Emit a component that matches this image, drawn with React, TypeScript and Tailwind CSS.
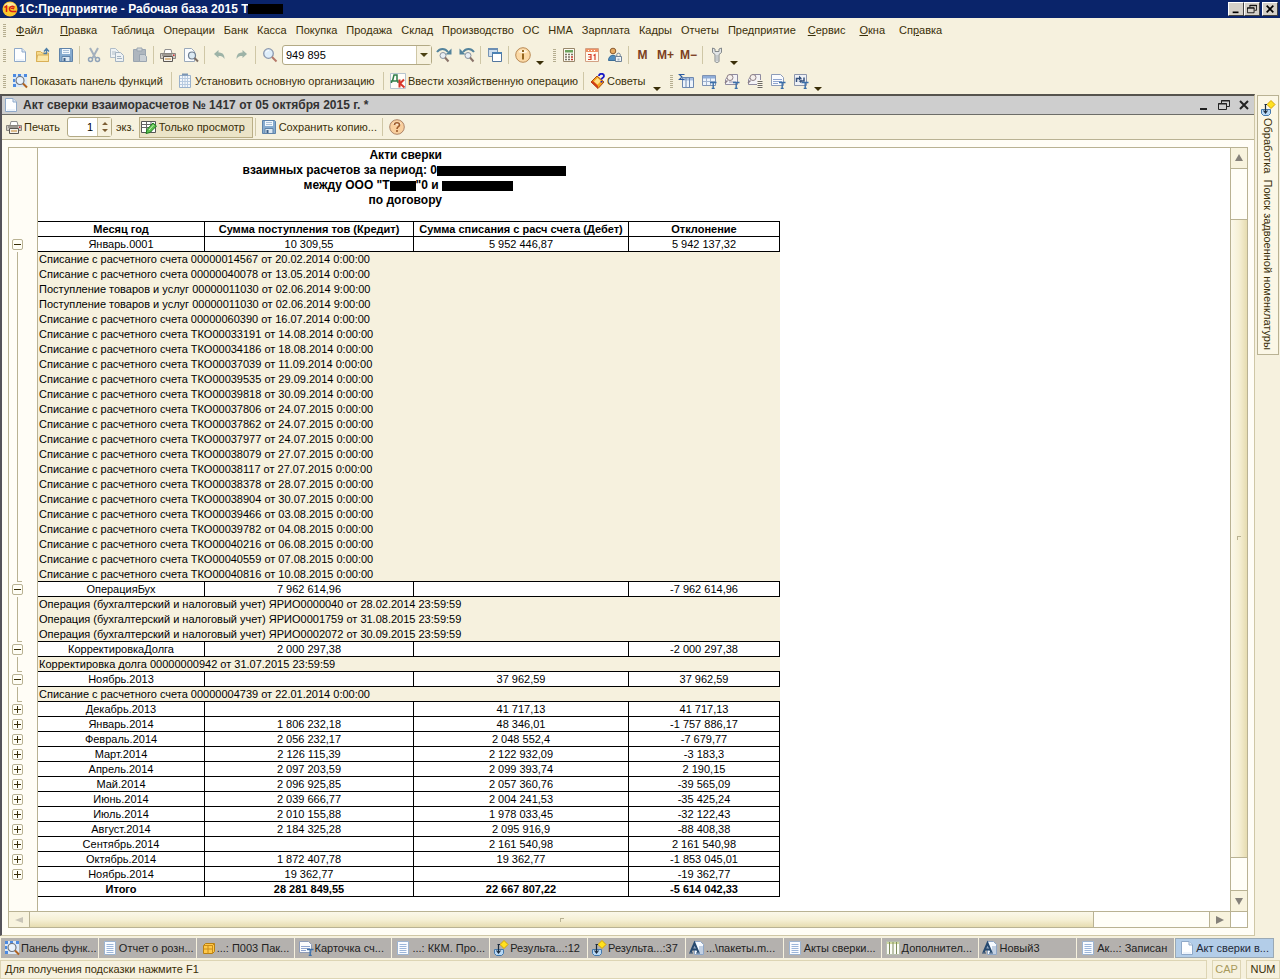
import React, { useState } from 'react';

interface Group {
  label: string;
  credit: string;
  debit: string;
  diff: string;
  details: string[];
}

const pay = 'Списание с расчетного счета';
const receipt = 'Поступление товаров и услуг';
const operation = 'Операция (бухгалтерский и налоговый учет)';

const groups: Group[] = [
  {
    label: 'Январь.0001',
    credit: '10 309,55',
    debit: '5 952 446,87',
    diff: '5 942 137,32',
    details: [
      `${pay} 00000014567 от 20.02.2014 0:00:00`,
      `${pay} 00000040078 от 13.05.2014 0:00:00`,
      `${receipt} 00000011030 от 02.06.2014 9:00:00`,
      `${receipt} 00000011030 от 02.06.2014 9:00:00`,
      `${pay} 00000060390 от 16.07.2014 0:00:00`,
      `${pay} ТКО00033191 от 14.08.2014 0:00:00`,
      `${pay} ТКО00034186 от 18.08.2014 0:00:00`,
      `${pay} ТКО00037039 от 11.09.2014 0:00:00`,
      `${pay} ТКО00039535 от 29.09.2014 0:00:00`,
      `${pay} ТКО00039818 от 30.09.2014 0:00:00`,
      `${pay} ТКО00037806 от 24.07.2015 0:00:00`,
      `${pay} ТКО00037862 от 24.07.2015 0:00:00`,
      `${pay} ТКО00037977 от 24.07.2015 0:00:00`,
      `${pay} ТКО00038079 от 27.07.2015 0:00:00`,
      `${pay} ТКО00038117 от 27.07.2015 0:00:00`,
      `${pay} ТКО00038378 от 28.07.2015 0:00:00`,
      `${pay} ТКО00038904 от 30.07.2015 0:00:00`,
      `${pay} ТКО00039466 от 03.08.2015 0:00:00`,
      `${pay} ТКО00039782 от 04.08.2015 0:00:00`,
      `${pay} ТКО00040216 от 06.08.2015 0:00:00`,
      `${pay} ТКО00040559 от 07.08.2015 0:00:00`,
      `${pay} ТКО00040816 от 10.08.2015 0:00:00`,
    ],
  },
  {
    label: 'ОперацияБух',
    credit: '7 962 614,96',
    debit: '',
    diff: '-7 962 614,96',
    details: [
      `${operation} ЯРИО0000040 от 28.02.2014 23:59:59`,
      `${operation} ЯРИО0001759 от 31.08.2015 23:59:59`,
      `${operation} ЯРИО0002072 от 30.09.2015 23:59:59`,
    ],
  },
  {
    label: 'КорректировкаДолга',
    credit: '2 000 297,38',
    debit: '',
    diff: '-2 000 297,38',
    details: ['Корректировка долга 00000000942 от 31.07.2015 23:59:59'],
  },
  {
    label: 'Ноябрь.2013',
    credit: '',
    debit: '37 962,59',
    diff: '37 962,59',
    details: [`${pay} 00000004739 от 22.01.2014 0:00:00`],
  },
  { label: 'Декабрь.2013', credit: '', debit: '41 717,13', diff: '41 717,13', details: [] },
  { label: 'Январь.2014', credit: '1 806 232,18', debit: '48 346,01', diff: '-1 757 886,17', details: [] },
  { label: 'Февраль.2014', credit: '2 056 232,17', debit: '2 048 552,4', diff: '-7 679,77', details: [] },
  { label: 'Март.2014', credit: '2 126 115,39', debit: '2 122 932,09', diff: '-3 183,3', details: [] },
  { label: 'Апрель.2014', credit: '2 097 203,59', debit: '2 099 393,74', diff: '2 190,15', details: [] },
  { label: 'Май.2014', credit: '2 096 925,85', debit: '2 057 360,76', diff: '-39 565,09', details: [] },
  { label: 'Июнь.2014', credit: '2 039 666,77', debit: '2 004 241,53', diff: '-35 425,24', details: [] },
  { label: 'Июль.2014', credit: '2 010 155,88', debit: '1 978 033,45', diff: '-32 122,43', details: [] },
  { label: 'Август.2014', credit: '2 184 325,28', debit: '2 095 916,9', diff: '-88 408,38', details: [] },
  { label: 'Сентябрь.2014', credit: '', debit: '2 161 540,98', diff: '2 161 540,98', details: [] },
  { label: 'Октябрь.2014', credit: '1 872 407,78', debit: '19 362,77', diff: '-1 853 045,01', details: [] },
  { label: 'Ноябрь.2014', credit: '19 362,77', debit: '', diff: '-19 362,77', details: [] },
];

/* ---------- icons ---------- */

const Icon = ({ children }: { children: React.ReactNode }) => (
  <svg className="size-4 shrink-0" viewBox="0 0 16 16" fill="none" aria-hidden="true">
    {children}
  </svg>
);

const NewDocIcon = () => (
  <Icon>
    <path d="M2.500 1.500h7.500l3.500 3.500v9.500h-11z" fill="#fdfeff" stroke="#8fa9c9" />
    <path d="M4 12.500h8v1h-8z" fill="#dbe8f6" />
    <path d="M10 1.500v3.500h3.500" fill="#dbe8f6" stroke="#8fa9c9" />
  </Icon>
);

const OpenIcon = () => (
  <Icon>
    <path d="M1.500 14.500v-10h4l1.500 1.500h6.500v8.500z" fill="#f6d98a" stroke="#d9b057" />
    <path d="M1.500 14.500l1-6.500h11v6.500z" fill="#fbe7a8" stroke="#d9b057" />
    <path d="M8.500 6.500h3V2M9 4.500l2.500-3 2.500 3" stroke="#4f7fa8" strokeWidth="1.300" />
  </Icon>
);

const SaveIcon = () => (
  <Icon>
    <path d="M1.500 1.500h12l1 1v12h-13z" fill="#86abcf" stroke="#5f83a9" />
    <path d="M4 2h8v5H4z" fill="#f2f8fd" />
    <path d="M5 3.500h6M5 5.500h6" stroke="#a9c0d8" />
    <path d="M4 9.500h8v5H4z" fill="#dce8f2" stroke="#5f83a9" />
    <path d="M5.500 11h2v3h-2z" fill="#3d5f85" />
  </Icon>
);

const CutIcon = () => (
  <Icon>
    <path d="M4 1l5.500 10M12 1L6.500 11" stroke="#a3b0bd" strokeWidth="2" />
    <circle cx="4.500" cy="12.500" r="2" stroke="#8fa3b8" strokeWidth="1.500" />
    <circle cx="11.500" cy="12.500" r="2" stroke="#8fa3b8" strokeWidth="1.500" />
  </Icon>
);

const CopyIcon = () => (
  <Icon>
    <path d="M1.500 1.500h5l3 3v6h-8z" fill="#eef2f4" stroke="#b0bdc8" />
    <path d="M3 5h4M3 7h4" stroke="#b0bdc8" />
    <path d="M6.500 5.500h5l3 3v6h-8z" fill="#eef2f4" stroke="#a3b3c2" />
    <path d="M8 9.500h4M8 11.500h5" stroke="#a3b3c2" />
  </Icon>
);

const PasteIcon = () => (
  <Icon>
    <path d="M1.500 2.500h12v12h-12z" fill="#aeb6be" stroke="#9aa5b0" />
    <path d="M5 1h5v3H5z" fill="#d4d8da" stroke="#9aa5b0" />
    <path d="M7.500 7.500h5l2 2v5h-7z" fill="#c9cfd4" stroke="#9aa5b0" />
  </Icon>
);

const PrintIcon = () => (
  <Icon>
    <path d="M4 6.500l1-4h6l1 4" fill="#fff" stroke="#8f8f8f" />
    <path d="M.5 6.500h15v5H.5z" fill="#cfcbc4" stroke="#8a8680" />
    <path d="M3.500 9.500h9v5h-9z" fill="#f5f2ec" stroke="#5b5753" />
    <path d="M5 12h6" stroke="#c4842a" />
    <path d="M2 8h10" stroke="#6b6660" />
    <path d="M13 7.500h1.500V9H13z" fill="#c33" />
  </Icon>
);

const PreviewIcon = () => (
  <Icon>
    <path d="M1.500 1.500h7l3 3v10h-10z" fill="#fbfdff" stroke="#9aa9ba" />
    <circle cx="9" cy="8.500" r="3.500" fill="#dceaf3" stroke="#6f7f90" strokeWidth="1.200" />
    <path d="M11.500 11l3.500 3.500" stroke="#7c6d62" strokeWidth="2" />
  </Icon>
);

const UndoIcon = () => (
  <Icon>
    <path d="M3 7l4.500-4v2.500c4 0 6 2 6 6.500-1.500-2.500-3-3-6-3V11z" fill="#9db3a7" />
  </Icon>
);

const RedoIcon = () => (
  <Icon>
    <path d="M13 7L8.500 3v2.500c-4 0-6 2-6 6.500 1.500-2.500 3-3 6-3V11z" fill="#9db3a7" />
  </Icon>
);

const SearchIcon = () => (
  <Icon>
    <circle cx="6.500" cy="6.500" r="4.800" fill="#dfeefa" stroke="#8b98ae" strokeWidth="1.300" />
    <path d="M4 5.500c.5-1.500 2-2 3-2" stroke="#fff" />
    <path d="M10 10l4.500 4.500" stroke="#b5796a" strokeWidth="2" />
  </Icon>
);

const FindNextIcon = () => (
  <Icon>
    <path d="M1 5c3-4 8-4 11 0" stroke="#53839c" strokeWidth="2" />
    <path d="M15.500 1.500v6h-6z" fill="#53839c" />
    <circle cx="7" cy="8.500" r="3" fill="#e8eef4" stroke="#8a94a2" />
    <path d="M9 10.500l3.500 4" stroke="#8a746a" strokeWidth="2" />
  </Icon>
);

const FindPrevIcon = () => (
  <Icon>
    <path d="M15 5c-3-4-8-4-11 0" stroke="#53839c" strokeWidth="2" />
    <path d="M.5 1.500v6h6z" fill="#53839c" />
    <circle cx="9" cy="8.500" r="3" fill="#e8eef4" stroke="#8a94a2" />
    <path d="M11 10.500l3.500 4" stroke="#8a746a" strokeWidth="2" />
  </Icon>
);

const WindowsIcon = () => (
  <Icon>
    <path d="M1.500 1.500h9v8h-9z" fill="#cfdeed" stroke="#7794b4" />
    <path d="M1 2h10" stroke="#6d8fb4" strokeWidth="2" />
    <path d="M5.500 5.500h9v9h-9z" fill="#fff" stroke="#54779f" />
    <path d="M5 6h10" stroke="#4c82b4" strokeWidth="2" />
  </Icon>
);

const InfoIcon = () => (
  <Icon>
    <circle cx="8" cy="8" r="7.300" fill="#fbd9a6" stroke="#b98a55" />
    <path d="M3.500 5c2-3 7-3 9 0-2 1.500-7 1.500-9 0z" fill="#fff3dc" />
    <path d="M8 3v2M8 6.500v6" stroke="#8a5a12" strokeWidth="1.800" />
  </Icon>
);

const HelpIcon = () => (
  <Icon>
    <circle cx="8" cy="8" r="7.300" fill="#f9cf9d" stroke="#ad8468" />
    <path d="M3.500 5c2-3 7-3 9 0-2 1.500-7 1.500-9 0z" fill="#fdebd2" />
    <path d="M5.500 6c0-3 5-3 5 0 0 1.700-2.500 1.800-2.500 4M8 11v2" stroke="#9c5a2c" strokeWidth="1.600" />
  </Icon>
);

const CalcIcon = () => (
  <Icon>
    <path d="M2.500 1.500h11v13h-11z" fill="#fdfbf2" stroke="#98876b" />
    <path d="M4 3h8v2.500H4z" fill="#6aa35c" />
    <path d="M4 7.500h2m1 0h2m1 0h2M4 10h2m1 0h2M4 12.500h2m1 0h2" stroke="#7a7365" strokeWidth="1.500" />
    <path d="M10 10h2m-2 2.500h2" stroke="#c0392b" strokeWidth="1.500" />
  </Icon>
);

const CalendarIcon = () => (
  <Icon>
    <path d="M1.500 1.500h13v13h-13z" fill="#fffaf0" stroke="#d3a184" />
    <path d="M2 2h12v3H2z" fill="#ef9163" />
    <path d="M4 3.500h1m2 0h1m2 0h1" stroke="#fff" />
    <path d="M4 7.500h3v5H4M4.500 10H7M9.500 8.500l1.500-1V13" stroke="#d9402a" strokeWidth="1.200" />
  </Icon>
);

const UserLockIcon = () => (
  <Icon>
    <circle cx="6" cy="4" r="2.800" fill="#e6ab62" stroke="#8a5c31" />
    <path d="M1.500 13.500c0-7 9-7 9 0z" fill="#4f8dbf" stroke="#3a6d98" />
    <path d="M8.500 9.500h6v5h-6z" fill="#eef3f7" stroke="#6f8297" />
    <path d="M9.800 9.500V7.500c0-1.800 3.400-1.800 3.400 0v2" stroke="#6f8297" />
    <path d="M10.500 11.500h2v2h-2z" fill="#9fb1c2" />
  </Icon>
);

const WrenchIcon = () => (
  <Icon>
    <path
      d="M3.500 1v4.500l2.500 2v6.500c0 2 4 2 4 0V7.500l2.500-2V1l-2.500 1v2.500H6V2z"
      fill="#e2e5e6"
      stroke="#84898b"
    />
    <path d="M8 8v6" stroke="#a9aeb0" />
  </Icon>
);

const FunctionsIcon = () => (
  <Icon>
    <path d="M1 1h14v13H1z" fill="#dbe9f8" />
    <path d="M1 1h3v3H1zM6 1h3v3H6zM12 1h3v3h-3zM1 6h2v3H1zM1 11h3v3H1z" fill="#4c8ae0" />
    <circle cx="8" cy="7.500" r="4" fill="#e9f2fb" stroke="#70747c" strokeWidth="1.200" />
    <path d="M11 10.500l4 4" stroke="#b0621f" strokeWidth="2" />
  </Icon>
);

const OrgIcon = () => (
  <Icon>
    <path d="M2.500 2.500h11v12h-11z" fill="#f3f7fb" stroke="#9ab1cb" />
    <path d="M3 5.500h10M3 8.500h10M3 11.500h10M5.500 3v11M8 3v11M10.500 3v11" stroke="#b7cae0" />
    <path d="M5 1.500h6" stroke="#7c96b5" strokeWidth="2" />
  </Icon>
);

const DebitCreditIcon = () => (
  <Icon>
    <path d="M.5.500h15v15H.5z" fill="#fffdf8" stroke="#b7c4ce" />
    <path d="M1.500 10V8h1l1.500-6h3v6h1v2M3 8h4" stroke="#2f7d48" strokeWidth="1.500" />
    <path d="M9.500 6.500v8M14 6.500l-4 4 4.500 4" stroke="#d8352a" strokeWidth="2" />
  </Icon>
);

const TipsIcon = () => (
  <Icon>
    <path d="M1 9l6-6 7 6-6 6.500z" fill="#f5a21c" stroke="#a84b10" />
    <path d="M1 9l7 6.500v-2.500L3 8z" fill="#cf3a1a" />
    <path d="M4 8.500l3.500-3.500 3.500 3-3.500 3.500z" fill="#ffe08a" />
    <path d="M9 3c0-3 5-3 5 0 0 1.700-2.500 1.600-2.500 3.500M11.500 8v1.500" stroke="#1919c8" strokeWidth="1.800" />
  </Icon>
);

const ReportT = () => (
  <path d="M9 9.500h6.500M12.200 9.500v6M10.700 15.500h3" stroke="#3b6fa8" strokeWidth="1.400" />
);

const SumReportIcon = () => (
  <Icon>
    <path d="M4.500 4.500h11v10h-11z" fill="#eef4fb" stroke="#6d88b0" />
    <path d="M5 5h10v2.500H5z" fill="#a9c0e2" />
    <path d="M8 5v9M11.500 5v9" stroke="#6d88b0" />
    <path d="M6.500 1.500h-5l2.500 2.500-2.500 2.500h5" stroke="#2b5aa0" strokeWidth="1.200" />
  </Icon>
);

const GridReportIcon = () => (
  <Icon>
    <path d="M1.500 2.500h13v10h-13z" fill="#eef4fb" stroke="#7f92b2" />
    <path d="M2 3h12v2.500H2z" fill="#8fadd8" />
    <path d="M5.500 5v7M9.500 5v7M2 8.500h12" stroke="#9fb2cf" />
    <ReportT />
  </Icon>
);

const AccountReportIcon = () => (
  <Icon>
    <path d="M5.500 1.500h8v10h-12v-5z" fill="#f4f3f6" stroke="#8f8ba0" />
    <circle cx="6" cy="4.500" r="3" fill="#f6f0ec" stroke="#8d7f86" />
    <path d="M3.500 7.500L1 10" stroke="#8d7f86" strokeWidth="1.500" />
    <path d="M5 9h7" stroke="#9d9ab0" />
    <ReportT />
  </Icon>
);

const AccountListIcon = () => (
  <Icon>
    <path d="M5.500 1.500h8v10h-12v-5z" fill="#f4f3f6" stroke="#8f8ba0" />
    <circle cx="6" cy="4.500" r="3" fill="#f6f0ec" stroke="#8d7f86" />
    <path d="M3.500 7.500L1 10" stroke="#8d7f86" strokeWidth="1.500" />
    <path d="M10 7h5.500v8.500H10z" fill="#fbf6ea" />
    <path d="M10.500 8.500h5M10.500 10.500h5M10.500 12.500h5M10.500 14.500h5" stroke="#6d6a62" />
  </Icon>
);

const CardIcon = () => (
  <Icon>
    <path d="M1.500 1.500h9l3 3v8h-12z" fill="#fafbfd" stroke="#8d9cb8" />
    <path d="M3 6.500h9M3 8.500h9M3 10.500h5" stroke="#8fa5cf" />
    <ReportT />
  </Icon>
);

const TurnoverIcon = () => (
  <Icon>
    <path d="M1.500 1.500h12v11h-12z" fill="#eef1f6" stroke="#8d96ac" />
    <path d="M3.500 9V5.500h3M11 4.500V8H8" stroke="#34507c" strokeWidth="1.500" />
    <path d="M6 2.500l3 3-3 3zM8.500 5.500l-3 2.500 3 2.500z" fill="#34507c" />
    <ReportT />
  </Icon>
);

const ViewOnlyIcon = () => (
  <Icon>
    <path d="M.5 2.500h14v11H.5z" fill="#fff" stroke="#555" />
    <path d="M.5 5.500h14M.5 8.500h14M5.500 2.500v11M10 2.500v11" stroke="#666" />
    <path d="M5 14.500l1-4 6-6.500 3.500 3-6.500 6.500z" fill="#5cc04e" stroke="#1f7a22" />
    <path d="M8 11l4.500-5" stroke="#c6f0b8" />
  </Icon>
);

const ListIcon = () => (
  <Icon>
    <path d="M2.500 1.500h11v13h-11z" fill="#fafcff" stroke="#9db4d0" />
    <path d="M4.500 4.500h7M4.500 6.500h7M4.500 8.500h7M4.500 10.500h7M4.500 12.500h7" stroke="#9cb6da" />
  </Icon>
);

const BoxIcon = () => (
  <Icon>
    <path d="M3.500 5.500l2-2h9v8l-2 2h-9z" fill="#ffc94a" stroke="#b87f10" />
    <path d="M3.500 5.500h9v8M12.500 5.500l2-2M3.500 9h9M8 5.500v8" stroke="#c98d1a" />
  </Icon>
);

const ProcessIcon = () => (
  <Icon>
    <path d="M11 .5l4 4-4 4-4-4z" fill="#ffe11f" stroke="#d7a400" />
    <path d="M1.500 9.500h9v4l-2 2h-5l-2-2z" fill="#b7d8f5" stroke="#4479ad" />
    <path d="M4.500 4.500H7M5.500 4.500v8M3.500 10.500l2 2.500 2-2.500" stroke="#1b2a3c" strokeWidth="1.200" />
  </Icon>
);

const TextDocIcon = () => (
  <Icon>
    <path d="M5.500 1.500h6l3 3v10h-9z" fill="#f6faff" stroke="#8ea6c6" />
    <path d="M10 7h4M10 9h4M10 11h4M8 13h6" stroke="#8ea6c6" />
    <path d="M1.500 12.500L5.500 3l4 9.500M3 9.500h5" stroke="#26496f" strokeWidth="2" />
    <path d="M0 13h4M7 13h4" stroke="#26496f" />
  </Icon>
);

const ColumnsIcon = () => (
  <Icon>
    <path d="M1.500 1.500h13v13h-13z" fill="#fbfcf7" stroke="#b7bfae" />
    <path d="M2 2h12v2H2z" fill="#cfd9a0" />
    <path d="M4.500 2v12M8 2v12M11.500 2v12" stroke="#7f8c5e" />
  </Icon>
);

const LogoIcon = () => (
  <Icon>
    <circle cx="8" cy="8" r="7.500" fill="#f9c62c" />
    <path d="M2 4.500c3-4 9-4 12 0-4 1-8 1-12 0z" fill="#fdea9c" />
    <path
      d="M2.500 6.500l2-1.500v6M12.500 6.500c-1-2-5-1.500-5 1.500s3 2.500 7 2.500M12 8c-1-1-2.500-1-2.500 0"
      stroke="#d7201a"
      strokeWidth="1.500"
    />
  </Icon>
);

/* ---------- small pieces ---------- */

const Grip = () => (
  <span className="flex w-1 shrink-0 flex-col gap-px" aria-hidden="true">
    {[0, 1, 2, 3, 4, 5, 6].map((i) => (
      <span key={i} className="h-px w-[3px] bg-[#b5ad8f]" />
    ))}
  </span>
);

const Sep = () => (
  <span className="flex w-[5px] shrink-0 justify-center" aria-hidden="true">
    <span className="h-[18px] w-px bg-[#cfc7a6]" />
  </span>
);

const More = () => (
  <button aria-label="Ещё" className="flex h-5 w-[11px] shrink-0 items-end justify-center">
    <svg className="h-1 w-2" viewBox="0 0 8 4" aria-hidden="true">
      <path d="M0 0h8L4 4z" fill="#3a2f08" />
    </svg>
  </button>
);

interface ToolProps {
  label: string;
  children: React.ReactNode;
}

const Tool = ({ label, children }: ToolProps) => (
  <button
    aria-label={label}
    className="flex h-[22px] w-[23px] shrink-0 items-center justify-center text-[12px] font-bold text-[#7c3f1d]"
  >
    {children}
  </button>
);

const MinIcon = () => (
  <svg className="size-3" viewBox="0 0 12 12" aria-hidden="true">
    <path d="M2 9h7v2H2z" fill="currentColor" />
  </svg>
);

const RestoreIcon = () => (
  <svg className="size-3" viewBox="0 0 12 12" fill="none" aria-hidden="true">
    <path d="M3.500 4V1.500h8v6H9M3 2h9" stroke="currentColor" />
    <path d="M.5 4.500h8v6h-8zM0 5h9" stroke="currentColor" />
  </svg>
);

const CloseIcon = () => (
  <svg className="size-3" viewBox="0 0 12 12" fill="none" aria-hidden="true">
    <path d="M2 2l8 8M10 2l-8 8" stroke="currentColor" strokeWidth="2" />
  </svg>
);

const Redacted = ({ className }: { className: string }) => (
  <span className={`inline-block h-[10px] shrink-0 bg-black ${className}`} />
);

/* ---------- top bars ---------- */

const TitleBar = () => {
  const button =
    'flex h-[14px] w-4 items-center justify-center border border-t-white border-r-[#404040] border-b-[#404040] border-l-white bg-[#d4d0c8] p-[2px] text-black';
  return (
    <header className="flex h-[18px] items-center bg-[#0a246a] pr-[2px] pl-[2px] text-white">
      <LogoIcon />
      <h1 className="ml-px text-[12px] font-bold">1С:Предприятие - Рабочая база 2015 Т</h1>
      <Redacted className="w-[35px]" />
      <div className="ml-auto flex">
        <button aria-label="Свернуть" className={button}>
          <MinIcon />
        </button>
        <button aria-label="Восстановить" className={button}>
          <RestoreIcon />
        </button>
        <button aria-label="Закрыть" className={`ml-[2px] ${button}`}>
          <CloseIcon />
        </button>
      </div>
    </header>
  );
};

const menuItems = [
  'Таблица', 'Операции', 'Банк', 'Касса', 'Покупка', 'Продажа', 'Склад', 'Производство',
  'ОС', 'НМА', 'Зарплата', 'Кадры', 'Отчеты', 'Предприятие',
];

const MenuBar = () => (
  <nav className="flex h-6 items-center gap-[9px] pt-px pl-[3px]">
    <Grip />
    <button className="pr-2"><u>Ф</u>айл</button>
    <button className="pr-[5px]"><u>П</u>равка</button>
    {menuItems.map((item) => (
      <button key={item}>{item}</button>
    ))}
    <button className="pr-[5px] pl-[3px]"><u>С</u>ервис</button>
    <button className="pr-[5px]"><u>О</u>кна</button>
    <button>Сп<u>р</u>авка</button>
  </nav>
);

const MainToolbar = () => (
  <div className="flex h-[26px] items-center pl-[3px]">
    <Grip />
    <div className="w-px" />
    <Tool label="Новый"><NewDocIcon /></Tool>
    <Tool label="Открыть"><OpenIcon /></Tool>
    <Tool label="Сохранить"><SaveIcon /></Tool>
    <Sep />
    <Tool label="Вырезать"><CutIcon /></Tool>
    <Tool label="Копировать"><CopyIcon /></Tool>
    <Tool label="Вставить"><PasteIcon /></Tool>
    <Sep />
    <Tool label="Печать"><PrintIcon /></Tool>
    <Tool label="Просмотр"><PreviewIcon /></Tool>
    <Sep />
    <Tool label="Отменить"><UndoIcon /></Tool>
    <Tool label="Вернуть"><RedoIcon /></Tool>
    <Sep />
    <Tool label="Найти"><SearchIcon /></Tool>
    <div className="ml-px flex h-5 w-[150px] shrink-0 rounded-[3px] border border-[#b3aa85] bg-white">
      <input
        aria-label="Строка поиска"
        defaultValue="949 895"
        className="min-w-0 flex-1 px-[3px] text-[11px] text-black outline-none"
      />
      <button
        aria-label="Список"
        className="flex w-[15px] items-center justify-center border-l border-[#cfc7a6] bg-[#f7f2df]"
      >
        <svg className="h-1 w-2" viewBox="0 0 8 4" aria-hidden="true">
          <path d="M0 0h8L4 4z" fill="#4c4214" />
        </svg>
      </button>
    </div>
    <Tool label="Найти далее"><FindNextIcon /></Tool>
    <Tool label="Найти ранее"><FindPrevIcon /></Tool>
    <Sep />
    <Tool label="Окна"><WindowsIcon /></Tool>
    <Sep />
    <Tool label="Сведения"><InfoIcon /></Tool>
    <More />
    <div className="ml-2"><Grip /></div>
    <Tool label="Калькулятор"><CalcIcon /></Tool>
    <Tool label="Календарь"><CalendarIcon /></Tool>
    <Tool label="Блокировка"><UserLockIcon /></Tool>
    <Sep />
    <Tool label="M">M</Tool>
    <Tool label="M+">M+</Tool>
    <Tool label="M-">M−</Tool>
    <Sep />
    <Tool label="Сервис"><WrenchIcon /></Tool>
    <More />
  </div>
);

const CommandToolbar = () => (
  <div className="flex h-[26px] items-center pl-[3px]">
    <Grip />
    <button className="ml-[5px] flex w-[157px] shrink-0 items-center gap-[2px]">
      <FunctionsIcon />
      Показать панель функций
    </button>
    <Sep />
    <button className="ml-[3px] flex w-[204px] shrink-0 items-center gap-[2px]">
      <OrgIcon />
      Установить основную организацию
    </button>
    <Sep />
    <button className="ml-1 flex w-[191px] shrink-0 items-center gap-[2px]">
      <DebitCreditIcon />
      Ввести хозяйственную операцию
    </button>
    <Sep />
    <button className="ml-1 flex w-[61px] shrink-0 items-center gap-px">
      <TipsIcon />
      Советы
    </button>
    <More />
    <div className="ml-2"><Grip /></div>
    <Tool label="Оборотно-сальдовая ведомость"><SumReportIcon /></Tool>
    <Tool label="Шахматка"><GridReportIcon /></Tool>
    <Tool label="ОСВ по счету"><AccountReportIcon /></Tool>
    <Tool label="Анализ счета"><AccountListIcon /></Tool>
    <Tool label="Карточка счета"><CardIcon /></Tool>
    <Tool label="Обороты счета"><TurnoverIcon /></Tool>
    <More />
  </div>
);

/* ---------- document window ---------- */

const DocumentHeader = () => (
  <div className="flex h-[19px] items-center border-b border-[#6d6d68] bg-[#cecece] pr-1 pl-px">
    <NewDocIcon />
    <h2 className="ml-1 text-[12px] font-bold text-[#333]">
      Акт сверки взаиморасчетов № 1417 от 05 октября 2015 г. *
    </h2>
    <div className="ml-auto flex gap-2 text-[#222]">
      <button aria-label="Свернуть окно"><MinIcon /></button>
      <button aria-label="Восстановить окно"><RestoreIcon /></button>
      <button aria-label="Закрыть окно"><CloseIcon /></button>
    </div>
  </div>
);

const DocumentToolbar = () => (
  <div className="flex h-[25px] items-center border-b border-[#b9b293] bg-[#f6f1de] pl-1">
    <button className="flex w-[61px] items-center gap-[2px]">
      <PrintIcon />
      Печать
    </button>
    <label className="flex items-center gap-1">
      <span className="flex h-5 w-[45px] rounded-[3px] border border-[#b3aa85] bg-white">
        <input
          defaultValue="1"
          className="min-w-0 flex-1 pr-1 text-right text-[11px] text-black outline-none"
        />
        <span className="flex w-[14px] items-center justify-center border-l border-[#cfc7a6] bg-[#f7f2df]">
          <svg className="h-[12px] w-[6px]" viewBox="0 0 6 12" aria-hidden="true">
            <path d="M0 4l3-3 3 3zM0 8h6l-3 3z" fill="#7d5f35" />
          </svg>
        </span>
      </span>
      экз.
    </label>
    <button className="ml-1 flex h-[21px] w-[114px] items-center gap-[2px] border border-[#b9ae86] bg-[#ebe4c8] pl-px">
      <ViewOnlyIcon />
      Только просмотр
    </button>
    <Sep />
    <button className="ml-[3px] flex w-[119px] items-center gap-[2px]">
      <SaveIcon />
      Сохранить копию...
    </button>
    <Sep />
    <button aria-label="Справка" className="ml-1"><HelpIcon /></button>
  </div>
);

interface GutterProps {
  open: boolean[];
  onToggle: (index: number) => void;
}

const Gutter = ({ open, onToggle }: GutterProps) => (
  <div className="w-[29px] shrink-0 border-r border-[#b9b293] bg-[#fffdf6] pt-[89px]">
    {groups.map((group, i) => (
      <div key={group.label} className="flex w-[17px] flex-col items-center">
        <div className="flex h-[15px] items-center">
          <button
            aria-label={group.label}
            aria-expanded={open[i]}
            onClick={() => onToggle(i)}
            className="flex size-[11px] items-center justify-center rounded-[2px] border border-[#b9b293] bg-[#fffef6]"
          >
            <svg className="size-[7px]" viewBox="0 0 7 7" aria-hidden="true">
              <path d={open[i] ? 'M0 3h7v1H0z' : 'M0 3h7v1H0zM3 0h1v7H3z'} fill="#3a2f08" />
            </svg>
          </button>
        </div>
        {open[i] &&
          group.details.map((detail, d) => (
            <div key={d} className="h-[15px] w-full pl-2">
              <div
                className={`h-full border-l border-[#b9b293] ${
                  d === group.details.length - 1 ? 'w-[5px] border-b' : ''
                }`}
              />
            </div>
          ))}
      </div>
    ))}
  </div>
);

const cell =
  'h-[15px] overflow-hidden border-r border-b border-black p-0 text-center align-top leading-[14px] whitespace-nowrap';

const ReportTable = ({ open }: { open: boolean[] }) => (
  <table className="w-[742px] table-fixed border-separate border-spacing-0">
    <colgroup>
      <col className="w-[167px]" />
      <col className="w-[209px]" />
      <col className="w-[215px]" />
      <col className="w-[151px]" />
    </colgroup>
    <thead>
      <tr>
        <th className={`border-t ${cell}`}>Месяц год</th>
        <th className={`border-t ${cell}`}>Сумма поступления тов (Кредит)</th>
        <th className={`border-t ${cell}`}>Сумма списания с расч счета (Дебет)</th>
        <th className={`border-t ${cell}`}>Отклонение</th>
      </tr>
    </thead>
    <tbody>
      {groups.map((group, i) => (
        <React.Fragment key={group.label}>
          <tr>
            <td className={cell}>{group.label}</td>
            <td className={cell}>{group.credit}</td>
            <td className={cell}>{group.debit}</td>
            <td className={cell}>{group.diff}</td>
          </tr>
          {open[i] &&
            group.details.map((detail, d) => (
              <tr key={d}>
                <td
                  colSpan={4}
                  className={`h-[15px] bg-[#f6f1de] p-0 pl-px align-top leading-[14px] whitespace-nowrap ${
                    d === group.details.length - 1 ? 'border-b border-black' : ''
                  }`}
                >
                  {detail}
                </td>
              </tr>
            ))}
        </React.Fragment>
      ))}
    </tbody>
    <tfoot>
      <tr className="font-bold">
        <td className={cell}>Итого</td>
        <td className={cell}>28 281 849,55</td>
        <td className={cell}>22 667 807,22</td>
        <td className={cell}>-5 614 042,33</td>
      </tr>
    </tfoot>
  </table>
);

const ReportTitle = () => (
  <div className="h-[73px] text-[12px] leading-[15px] font-bold">
    <p className="w-[404px] text-right">Акти сверки</p>
    <p className="flex items-center">
      <span className="w-[399px] text-right">взаимных расчетов за период: 0</span>
      <Redacted className="w-[129px]" />
    </p>
    <p className="flex items-center">
      <span className="flex w-[404px] items-center justify-end">
        <span>между ООО "Т</span>
        <Redacted className="w-[26px]" />
        <span className="whitespace-pre">"0 и </span>
      </span>
      <Redacted className="w-[71px]" />
    </p>
    <p className="w-[404px] text-right">по договору</p>
  </div>
);

const Arrow = ({ d }: { d: string }) => (
  <svg className="size-2" viewBox="0 0 8 8" aria-hidden="true">
    <path d={d} fill="currentColor" />
  </svg>
);

const VerticalScroll = () => (
  <div className="flex w-[17px] shrink-0 flex-col border-l border-[#b9b293] bg-[#fffef8]">
    <button
      aria-label="Вверх"
      className="flex h-[21px] items-center justify-center border-b border-[#b9b293] bg-[#f8f3de] text-[#85817a]"
    >
      <Arrow d="M0 7L4 0l4 7z" />
    </button>
    <div className="flex-[50]" />
    <div className="flex flex-[638] items-center justify-center border-y border-[#b9b293] bg-linear-to-r from-[#fbf8ea] via-[#f6f0d6] to-[#e6dcb0]">
      <span className="size-1 border-t border-l border-[#b9b293]" />
    </div>
    <div className="flex-[32]" />
    <button
      aria-label="Вниз"
      className="flex h-[21px] items-center justify-center border-t border-[#b9b293] bg-[#f8f3de] text-[#85817a]"
    >
      <Arrow d="M0 1h8L4 8z" />
    </button>
  </div>
);

const HorizontalScroll = () => (
  <div className="flex h-4 shrink-0 border-t border-[#b9b293] bg-[#fffef8]">
    <button
      aria-label="Влево"
      className="flex w-[21px] items-center justify-center border-r border-[#b9b293] bg-[#f8f3de] text-[#c9c5b8]"
    >
      <Arrow d="M8 1v6L0 4z" />
    </button>
    <div className="flex flex-[1066] items-center justify-center border-r border-[#b9b293] bg-linear-to-b from-[#fbf8ea] via-[#f6f0d6] to-[#e6dcb0]">
      <span className="size-1 border-t border-l border-[#b9b293]" />
    </div>
    <div className="flex-[115]" />
    <button
      aria-label="Вправо"
      className="flex w-[21px] items-center justify-center border-l border-[#b9b293] bg-[#f8f3de] text-[#85817a]"
    >
      <Arrow d="M0 0l8 4-8 4z" />
    </button>
    <div className="w-[17px] border-l border-[#b9b293] bg-white" />
  </div>
);

const DocumentWindow = () => {
  const [open, setOpen] = useState(groups.map((group) => group.details.length > 0));
  const toggle = (index: number) => setOpen(open.map((value, i) => (i === index ? !value : value)));

  return (
    <main className="flex min-w-0 flex-1 flex-col border-t-2 border-r border-b border-l-2 border-t-[#55534d] border-r-[#cfc7a6] border-b-[#cfc7a6] border-l-[#55535a] bg-[#fffdf6]">
      <DocumentHeader />
      <DocumentToolbar />
      <div className="flex flex-1 flex-col px-[6px] py-[7px]">
        <div className="flex flex-1 flex-col border border-[#b9b293]">
          <div className="flex flex-1">
            <Gutter open={open} onToggle={toggle} />
            <div className="flex-1 bg-white pb-3 text-[11px] text-black">
              <ReportTitle />
              <ReportTable open={open} />
            </div>
            <VerticalScroll />
          </div>
          <HorizontalScroll />
        </div>
      </div>
    </main>
  );
};

const SideTab = () => (
  <aside className="w-[25px] shrink-0 pt-px pl-[2px]">
    <button className="flex w-[22px] flex-col items-center gap-[2px] border border-[#b9b293] bg-[#fbf7e6] py-1">
      <ProcessIcon />
      <span className="whitespace-pre [writing-mode:vertical-rl]">
        Обработка  Поиск задвоенной номенклатуры
      </span>
    </button>
  </aside>
);

/* ---------- bottom bars ---------- */

const tasks = [
  { title: 'Панель функ...', icon: <FunctionsIcon /> },
  { title: 'Отчет о розн...', icon: <ListIcon /> },
  { title: '...: П003 Пак...', icon: <BoxIcon /> },
  { title: 'Карточка сч...', icon: <CardIcon /> },
  { title: '...: ККМ. Про...', icon: <ListIcon /> },
  { title: 'Результа...:12', icon: <ProcessIcon /> },
  { title: 'Результа...:37', icon: <ProcessIcon /> },
  { title: '...\\пакеты.m...', icon: <TextDocIcon /> },
  { title: 'Акты сверки...', icon: <ListIcon /> },
  { title: 'Дополнител...', icon: <ColumnsIcon /> },
  { title: 'Новый3', icon: <TextDocIcon /> },
  { title: 'Ак...: Записан', icon: <ListIcon /> },
  { title: 'Акт сверки в...', icon: <NewDocIcon />, active: true },
];

const TaskBar = () => (
  <div className="mt-[2px] flex gap-px pr-[6px] pl-px">
    {tasks.map((task) => (
      <button
        key={task.title}
        className={`flex h-5 min-w-0 flex-1 items-center gap-px pl-[3px] whitespace-nowrap ${
          task.active
            ? 'border border-[#9aa9b5] bg-[#b3cde8] text-[#1f2a38]'
            : 'bg-[#b4b1ae] text-[#222]'
        }`}
      >
        {task.icon}
        {task.title}
      </button>
    ))}
  </div>
);

const StatusBar = () => (
  <footer className="mt-[2px] flex h-[19px] gap-[5px] leading-[17px]">
    <div className="flex-1 border border-[#ddd5b4] pl-1">Для получения подсказки нажмите F1</div>
    <div className="w-[29px] border border-[#ddd5b4] text-center text-[#a89a5c]">CAP</div>
    <div className="w-[34px] border border-[#ddd5b4] text-center">NUM</div>
  </footer>
);

export default function App() {
  return (
    <div className="flex min-h-screen flex-col bg-[#f6f1de] font-['Liberation_Sans',Arial,sans-serif] text-[11px] text-[#3a2f08]">
      <TitleBar />
      <MenuBar />
      <MainToolbar />
      <CommandToolbar />
      <div className="flex flex-1">
        <DocumentWindow />
        <SideTab />
      </div>
      <TaskBar />
      <StatusBar />
    </div>
  );
}
